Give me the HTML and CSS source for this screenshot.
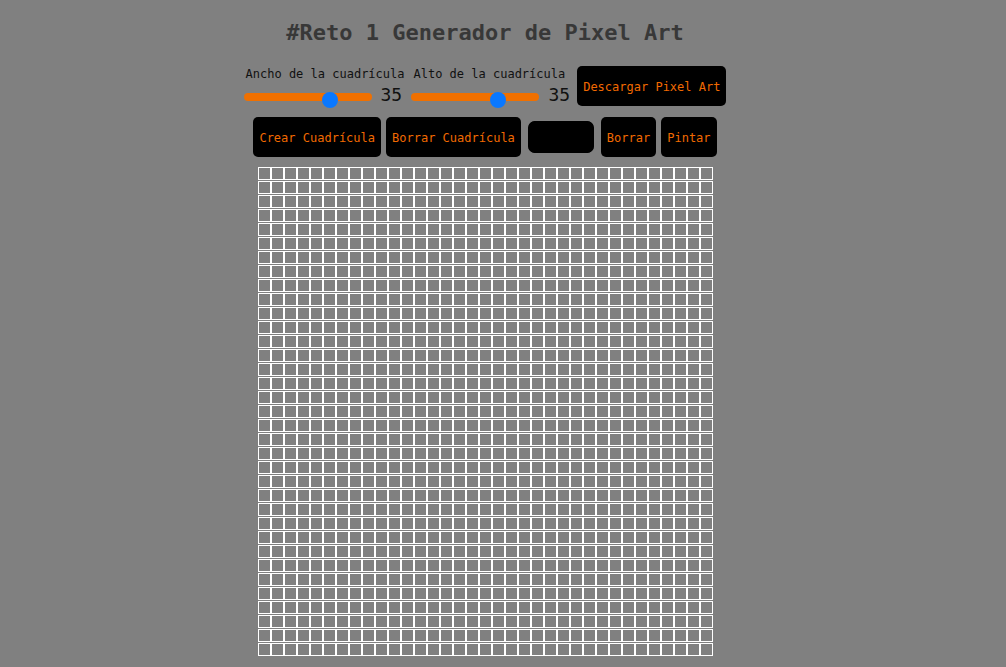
FILE: index.html
```html
<!DOCTYPE html>
<html lang="es">
<head>
<meta charset="utf-8">
<title>Generador de Pixel Art</title>
<link rel="stylesheet" href="styles.css">
</head>
<body>
<div class="page">
  <h1 class="title">#Reto 1 Generador de Pixel Art</h1>
  <div class="controls">
    <div class="field">
      <label class="field-label" for="ancho">Ancho de la cuadrícula</label>
      <div class="field-row">
        <input class="slider" id="ancho" type="range" min="0" max="50" value="35">
        <span class="value">35</span>
      </div>
    </div>
    <div class="field">
      <label class="field-label" for="alto">Alto de la cuadrícula</label>
      <div class="field-row">
        <input class="slider" id="alto" type="range" min="0" max="50" value="35">
        <span class="value">35</span>
      </div>
    </div>
    <button class="btn">Descargar Pixel Art</button>
  </div>
  <div class="actions">
    <button class="btn btn-tall">Crear Cuadrícula</button>
    <button class="btn btn-tall">Borrar Cuadrícula</button>
    <input class="color" type="color" value="#000000">
    <button class="btn btn-tall">Borrar</button>
    <button class="btn btn-tall">Pintar</button>
  </div>
  <div class="grid" id="grid"></div>
</div>
<script src="grid.js"></script>
</body>
</html>
```
FILE: styles.css
```css
* { box-sizing: border-box; }
html, body { margin: 0; padding: 0; }
body {
  background: #808080;
  font-family: "DejaVu Sans Mono", "Liberation Mono", monospace;
  overflow: hidden;
}
.page {
  width: 1006px;
  padding-right: 36px;
  display: flex;
  flex-direction: column;
  align-items: center;
}
.title {
  margin: 18px 0 0 0;
  font-size: 22px;
  line-height: 30px;
  font-weight: bold;
  color: #383838;
}
.controls {
  margin-top: 17px;
  display: flex;
  align-items: center;
  gap: 7px;
}
.field {
  display: flex;
  flex-direction: column;
}
.field-label {
  font-size: 12px;
  line-height: 16px;
  padding-left: 2px;
  margin-top: 1px;
  color: #111;
}
.field-row {
  display: flex;
  align-items: center;
  gap: 9px;
  height: 24px;
}
.slider {
  -webkit-appearance: none;
  appearance: none;
  width: 128px;
  height: 16px;
  margin: 6px 0 0 0;
  padding: 0;
  background: transparent;
}
.slider::-webkit-slider-runnable-track {
  height: 8px;
  border-radius: 4px;
  background: #f07000;
}
.slider::-webkit-slider-thumb {
  -webkit-appearance: none;
  appearance: none;
  width: 16px;
  height: 16px;
  border-radius: 50%;
  background: #0a78ff;
  margin-top: -1px;
  border: none;
}
.value {
  font-size: 18px;
  color: #111;
  line-height: 20px;
  margin-top: 1px;
}
.btn {
  font-family: "DejaVu Sans Mono", "Liberation Mono", monospace;
  font-size: 12px;
  color: #f26a00;
  background: #000;
  border: none;
  border-radius: 5px;
  padding: 2px 6px 0 6px;
  height: 40px;
  cursor: pointer;
}
.actions {
  margin-top: 11px;
  display: flex;
  align-items: center;
  gap: 5px;
}
.color {
  -webkit-appearance: none;
  appearance: none;
  width: 66px;
  height: 32px;
  margin: 0 2px;
  padding: 0;
  border: none;
  border-radius: 7px;
  background: #000;
}
.color::-webkit-color-swatch-wrapper { padding: 0; }
.color::-webkit-color-swatch { border: none; border-radius: 7px; }
.grid {
  margin-top: 10px;
  display: flex;
  flex-direction: column;
  gap: 1px;
}
.grid-row { display: flex; }
.cell {
  width: 13px;
  height: 13px;
  border: 1px solid #fff;
}
```
FILE: grid.js
```js
(function () {
  var grid = document.getElementById('grid');
  for (var r = 0; r < 35; r++) {
    var row = document.createElement('div');
    row.className = 'grid-row';
    for (var c = 0; c < 35; c++) {
      var cell = document.createElement('div');
      cell.className = 'cell';
      row.appendChild(cell);
    }
    grid.appendChild(row);
  }
})();
```
